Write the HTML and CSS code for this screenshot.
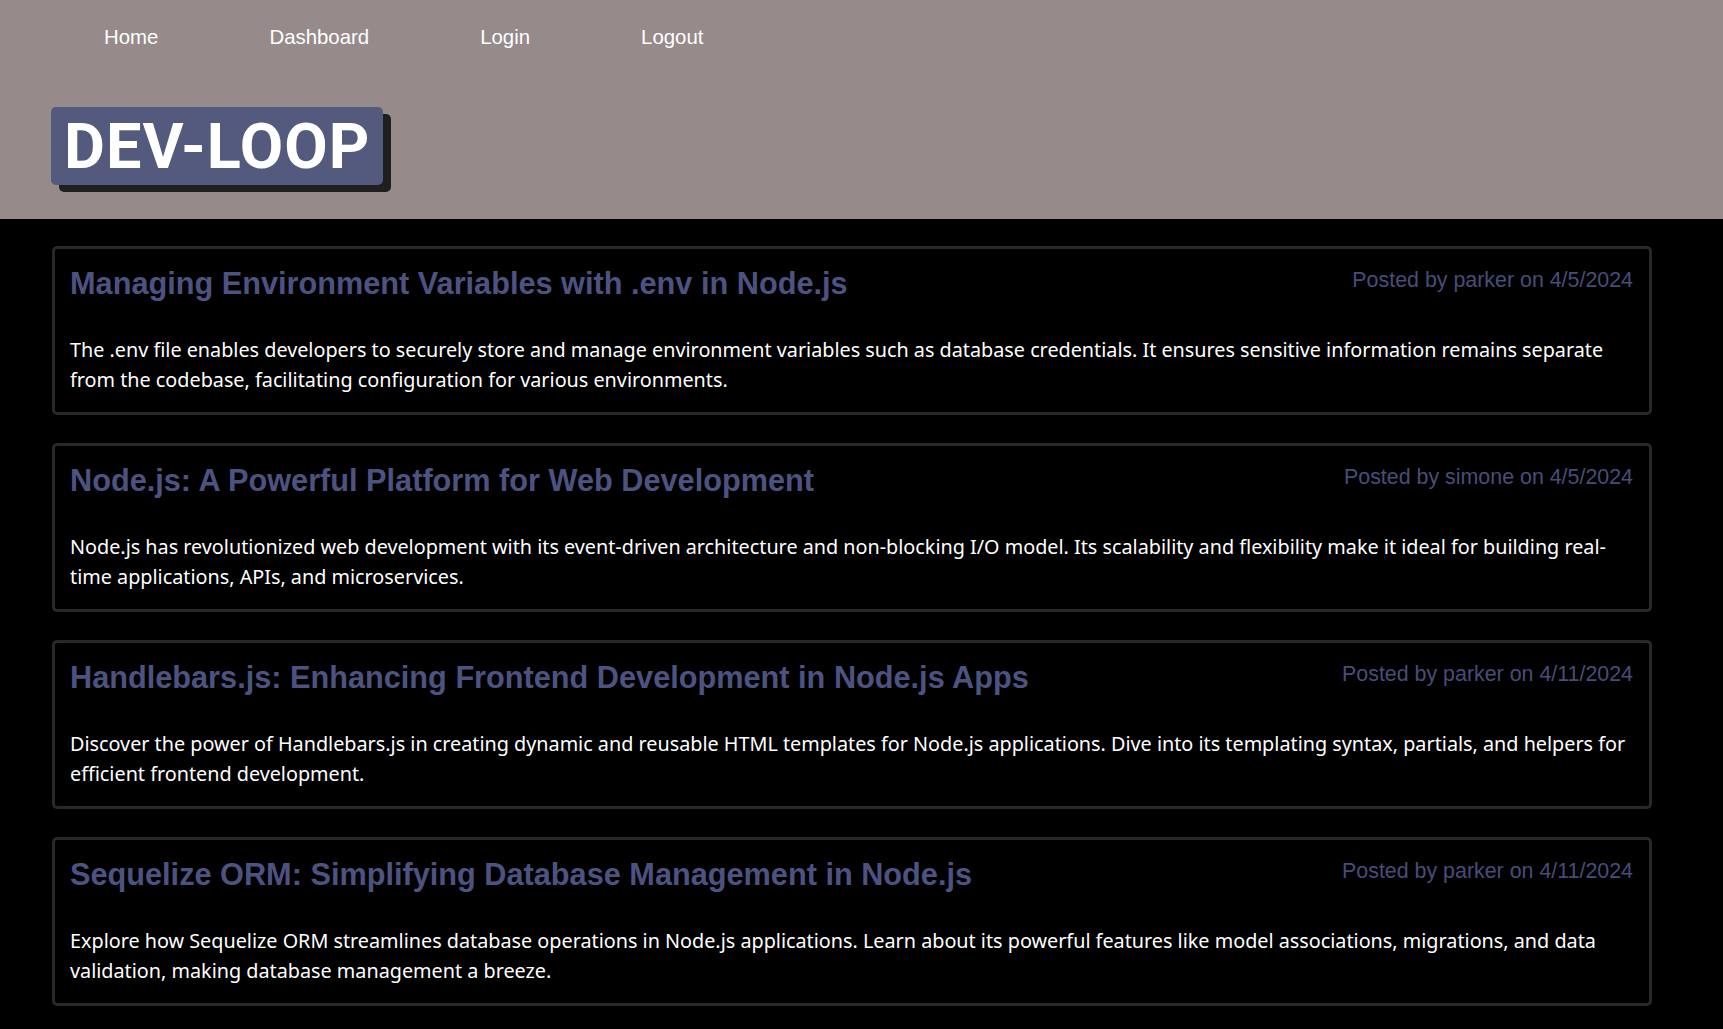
FILE: index.html
```html
<!DOCTYPE html>
<html lang="en">
<head>
<meta charset="utf-8">
<title>Dev-Loop</title>
<link rel="stylesheet" href="styles.css">
</head>
<body>
<header class="site-header">
  <nav class="nav">
    <a class="nav-link" href="#">Home</a>
    <a class="nav-link" href="#">Dashboard</a>
    <a class="nav-link" href="#">Login</a>
    <a class="nav-link" href="#">Logout</a>
  </nav>
  <div class="brand"><span class="logo">DEV-LOOP</span></div>
</header>
<main class="posts">
  <article class="post">
    <div class="post-head">
      <h2 class="post-title">Managing Environment Variables with .env in Node.js</h2>
      <span class="post-meta">Posted by parker on 4/5/2024</span>
    </div>
    <p class="post-body">The .env file enables developers to securely store and manage environment variables such as database credentials. It ensures sensitive information remains separate from the codebase, facilitating configuration for various environments.</p>
  </article>
  <article class="post">
    <div class="post-head">
      <h2 class="post-title">Node.js: A Powerful Platform for Web Development</h2>
      <span class="post-meta">Posted by simone on 4/5/2024</span>
    </div>
    <p class="post-body">Node.js has revolutionized web development with its event-driven architecture and non-blocking I/O model. Its scalability and flexibility make it ideal for building real-time applications, APIs, and microservices.</p>
  </article>
  <article class="post">
    <div class="post-head">
      <h2 class="post-title">Handlebars.js: Enhancing Frontend Development in Node.js Apps</h2>
      <span class="post-meta">Posted by parker on 4/11/2024</span>
    </div>
    <p class="post-body">Discover the power of Handlebars.js in creating dynamic and reusable HTML templates for Node.js applications. Dive into its templating syntax, partials, and helpers for efficient frontend development.</p>
  </article>
  <article class="post">
    <div class="post-head">
      <h2 class="post-title">Sequelize ORM: Simplifying Database Management in Node.js</h2>
      <span class="post-meta">Posted by parker on 4/11/2024</span>
    </div>
    <p class="post-body">Explore how Sequelize ORM streamlines database operations in Node.js applications. Learn about its powerful features like model associations, migrations, and data validation, making database management a breeze.</p>
  </article>
</main>
</body>
</html>
```

FILE: styles.css
```css
* { box-sizing: border-box; }

html, body {
  margin: 0;
  padding: 0;
}

body {
  background: #000;
  color: #fff;
  font-family: "Liberation Sans", Arial, sans-serif;
}

.site-header {
  background: #968a8a;
  padding: 25px 0 34px 51px;
}

.nav {
  display: flex;
  gap: 111px;
  padding-left: 53px;
}

.nav-link {
  color: #fff;
  text-decoration: none;
  font-size: 20.4px;
  line-height: 24px;
}

.brand {
  margin-top: 58px;
}

.logo {
  display: inline-block;
  background: #535a7e;
  color: #fff;
  font-family: Roboto, "Liberation Sans", sans-serif;
  font-weight: 700;
  font-size: 63px;
  letter-spacing: 1px;
  line-height: 76px;
  padding: 2px 13px 0 13px;
  border-radius: 5px;
  box-shadow: 8px 7px 0 #1f1f1f;
}

.posts {
  padding: 27px 52px 330px 52px;
}

.post {
  width: 1600px;
  border: 3px solid #282828;
  border-radius: 5px;
  padding: 15px 16px 17px 15px;
  margin-bottom: 28px;
}

.post-head {
  display: flex;
  justify-content: space-between;
  align-items: flex-start;
}

.post-title {
  margin: 0;
  color: #4d5380;
  font-size: 30.7px;
  font-weight: 700;
  line-height: 40px;
}

.post-meta {
  color: #474d78;
  font-size: 21.4px;
  line-height: 30px;
  margin-top: 1px;
}

.post-body {
  margin: 31px 0 0 0;
  font-family: "Noto Sans", "Liberation Sans", sans-serif;
  font-size: 19.8px;
  line-height: 30px;
}
```
